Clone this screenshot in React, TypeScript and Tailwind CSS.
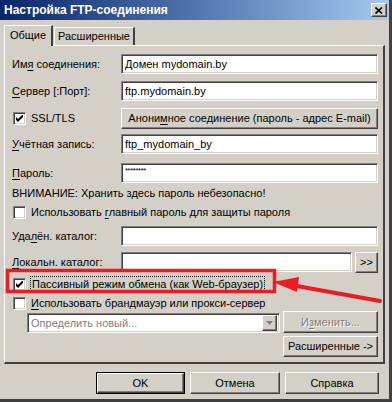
import React from "react";

const raised =
  "bg-[#d4d0c8] border border-t-white border-l-white border-r-[#404040] border-b-[#404040] shadow-[inset_-1px_-1px_0_#808080]";
const sunken =
  "bg-white border border-t-[#808080] border-l-[#808080] border-r-white border-b-white shadow-[inset_1px_1px_0_#404040,inset_-1px_-1px_0_#d4d0c8]";

function U({ children }: { children: React.ReactNode }) {
  return <span className="underline underline-offset-[2px]">{children}</span>;
}

function Check({ checked }: { checked?: boolean }) {
  return (
    <div className={`${sunken} w-[13px] h-[13px] shrink-0 flex items-center justify-center`}>
      {checked && (
        <svg width="7" height="7" viewBox="0 0 7 7">
          <path d="M0 2 L0 5 L2 7 L7 2 L7 -1 L2 4 Z" fill="#000" />
        </svg>
      )}
    </div>
  );
}

function Field({ label, value, className = "" }: { label: React.ReactNode; value?: React.ReactNode; className?: string }) {
  return (
    <div className={`flex items-center h-[20px] ${className}`}>
      <div className="w-[109px] shrink-0">{label}</div>
      <div className={`${sunken} flex-1 h-[20px] flex items-center px-[3px]`}>{value}</div>
    </div>
  );
}

export default function App() {
  return (
    <div
      className="relative w-[392px] h-[402px] bg-[#d4d0c8] text-[11px] leading-none text-black overflow-hidden border-r-[3px] border-b-[3px] border-r-[#404040] border-b-[#404040]"
      style={{ fontFamily: '"Liberation Sans", Arial, sans-serif' }}
    >
      {/* Title bar */}
      <div className="h-[20px] bg-gradient-to-r from-[#0a246a] to-[#a6caf0] flex items-center pl-[4px] pr-[2px]">
        <span className="text-white font-bold text-[12px] flex-1">Настройка FTP-соединения</span>
        <div className={`${raised} w-[16px] h-[14px] flex items-center justify-center`}>
          <svg width="8" height="7" viewBox="0 0 8 7">
            <path d="M0.5 0.5 L7 6.5 M7 0.5 L0.5 6.5" stroke="#000" strokeWidth="1.6" />
          </svg>
        </div>
      </div>

      {/* Tabs */}
      <div className="px-[4px] pt-[4px]">
        <div className="flex items-end h-[21px] relative z-10">
          <div className="h-[21px] w-[49px] bg-[#d4d0c8] border-t border-l border-t-white border-l-white border-r-2 border-r-[#404040] flex items-center justify-center -mb-px pb-[1px]">
            Общие
          </div>
          <div className="h-[18px] w-[81px] ml-px border-t border-l border-t-white border-l-white border-r-2 border-r-[#404040] flex items-center justify-center">
            Расширенные
          </div>
        </div>

        {/* Panel */}
        <div className="border border-t-white border-l-white border-r-2 border-b-2 border-r-[#404040] border-b-[#404040] pl-[7px] pr-[5px] pb-[5px] flex flex-col">
          <Field className="mt-[8px]" label={<>Им<U>я</U> соединения:</>} value="Домен mydomain.by" />
          <Field className="mt-[7px]" label={<><U>С</U>ервер [:Порт]:</>} value="ftp.mydomain.by" />
          <div className="flex items-center mt-[7px] h-[21px]">
            <div className="w-[109px] flex items-center gap-[5px] pl-px">
              <Check checked />
              <span>SSL/TLS</span>
            </div>
            <div className={`${raised} flex-1 h-[21px] flex items-center justify-center`}>
              Анони<U>м</U>ное соединение (пароль - адрес E-mail)
            </div>
          </div>
          <Field className="mt-[5px]" label={<><U>У</U>чётная запись:</>} value="ftp_mydomain_by" />
          <Field
            className="mt-[9px]"
            label={<><U>П</U>ароль:</>}
            value={<span className="text-[8px] self-start mt-[3px] tracking-[-0.5px]">********</span>}
          />
          <div className="mt-[3px] h-[14px] flex items-center">ВНИМАНИЕ: Хранить здесь пароль небезопасно!</div>
          <div className="mt-[5px] h-[14px] flex items-center gap-[5px] pl-px">
            <Check />
            <span>
              Использовать <U>г</U>лавный пароль для защиты пароля
            </span>
          </div>
          <Field className="mt-[7px]" label={<>Уда<U>л</U>ён. каталог:</>} />
          <div className="flex items-center mt-[6px] h-[20px]">
            <div className="w-[109px] shrink-0">
              <U>Л</U>окальн. каталог:
            </div>
            <div className={`${sunken} flex-1 h-[20px]`} />
            <div className={`${raised} w-[23px] h-[21px] ml-[3px] flex items-center justify-center`}>&gt;&gt;</div>
          </div>
          <div className="mt-[4px] h-[16px] flex items-center gap-[5px] pl-px">
            <Check checked />
            <span className="outline-1 outline-dotted outline-black px-px py-[2px]">
              Пассивный режим о<U>б</U>мена (как Web-браузер)
            </span>
          </div>
          <div className="mt-[4px] h-[14px] flex items-center gap-[5px] pl-px">
            <Check />
            <span>
              <U>И</U>спользовать брандмауэр или прокси-сервер
            </span>
          </div>
          <div className="flex items-start mt-px pl-[15px] gap-[3px]">
            <div className={`${sunken} flex-1 h-[20px] mt-[2px] flex items-center pl-[3px] pr-[2px] text-[#808080]`}>
              <span className="flex-1">Определить новый...</span>
              <div className={`${raised} w-[15px] h-[16px] flex items-center justify-center`}>
                <svg width="7" height="4" viewBox="0 0 7 4">
                  <path d="M0 0 H7 L3.5 4 Z" fill="#808080" />
                </svg>
              </div>
            </div>
            <div className={`${raised} w-[95px] h-[22px] flex items-center justify-center text-[#808080] [text-shadow:1px_1px_0_#fff]`}>
              И<U>з</U>менить...
            </div>
          </div>
          <div className="flex justify-end mt-[3px]">
            <div className={`${raised} w-[95px] h-[21px] flex items-center justify-center`}>Расширенные -&gt;</div>
          </div>
        </div>

        {/* Dialog buttons */}
        <div className="flex justify-end gap-[5px] mt-[8px] pr-[6px]">
          <div className="border border-black">
            <div className={`${raised} w-[87px] h-[20px] flex items-center justify-center`}>OK</div>
          </div>
          <div className={`${raised} w-[90px] h-[22px] flex items-center justify-center`}>Отмена</div>
          <div className={`${raised} w-[94px] h-[22px] flex items-center justify-center`}>Справка</div>
        </div>
      </div>

      {/* Red highlight and arrow */}
      <svg className="absolute left-0 top-0 pointer-events-none" width="392" height="402">
        <rect x="7.5" y="270.5" width="267" height="21" fill="none" stroke="#ec1c24" strokeWidth="3.5" />
        <path d="M380 301 L294 285.5" stroke="#ec1c24" strokeWidth="4" strokeLinecap="round" />
        <path d="M273 282 L299 277 L297 292 Z" fill="#ec1c24" />
      </svg>
    </div>
  );
}
